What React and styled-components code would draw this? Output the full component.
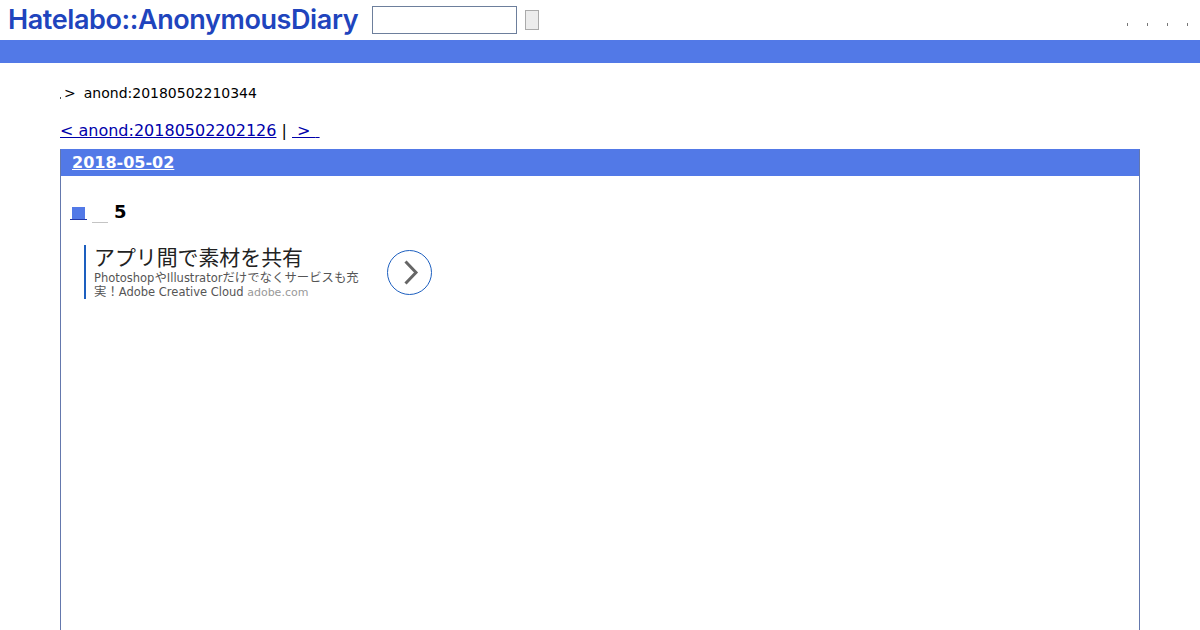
import React from "react"
import styled, { createGlobalStyle } from "styled-components"

const GlobalStyle = createGlobalStyle`
  html, body {
    margin: 0;
    padding: 0;
    height: 630px;
    overflow: hidden;
    background: #fff;
    color: #000;
    font-family: "DejaVu Sans", "Noto Sans CJK JP", sans-serif;
  }
  a { color: #0000aa; }
`

const Banner = styled.header`
  display: flex;
  align-items: flex-start;
  height: 40px;
`

const Logo = styled.a`
  margin: 3px 0 0 8px;
  width: 351px;
  font: 600 27px/34px "Inter", "Liberation Sans", sans-serif;
  letter-spacing: -0.4px;
  white-space: nowrap;
  color: #2044bd;
  text-decoration: none;
`

const SearchInput = styled.input`
  box-sizing: border-box;
  width: 145px;
  height: 28px;
  margin: 6px 0 0 13px;
  border: 1px solid #6d7f9c;
  background: #fff;
  padding: 0;
`

const SearchButton = styled.button`
  box-sizing: border-box;
  width: 14px;
  height: 20px;
  margin: 10px 0 0 8px;
  padding: 0;
  border: 1px solid #aaa;
  background: #ececec;
`

const Tools = styled.ul`
  display: flex;
  gap: 19px;
  list-style: none;
  margin: 23px 12px 0 auto;
  padding: 0;
`

const ToolDot = styled.li`
  width: 1px;
  height: 3px;
  background: #777;
`

const Bar = styled.div`
  height: 23px;
  background: #5279e7;
`

const Main = styled.main`
  padding: 0 60px;
`

const Crumbs = styled.p`
  display: flex;
  align-items: center;
  height: 18px;
  margin: 21px 0 0;
  font-size: 14px;
  line-height: 18px;
`

const CrumbDot = styled.span`
  width: 1px;
  height: 2px;
  margin: 9px 3px 0 0;
  background: #555;
`

const CrumbTitle = styled.span`
  margin-left: 8px;
`

const Pager = styled.div`
  margin-top: 19px;
  font-size: 16px;
  line-height: 20px;
  white-space: pre;
`

const Day = styled.section`
  box-sizing: border-box;
  height: 500px;
  margin-top: 8px;
  border: 1px solid #5279e7;
  border-left-color: #6478ad;
  border-right-color: #6478ad;
`

const DayTitle = styled.h2`
  height: 26px;
  margin: 0;
  padding-left: 11px;
  background: #5279e7;
  font-size: 16px;
  font-weight: 700;
  line-height: 26px;
  a { color: #fff; }
`

const SectionTitle = styled.h3`
  display: flex;
  align-items: center;
  height: 22px;
  margin: 24px 0 0 9px;
  font-size: 18px;
  font-weight: 700;
`

const SectionMark = styled.a`
  display: flex;
  justify-content: center;
  align-items: flex-end;
  width: 17px;
  height: 16px;
  border-bottom: 1px solid #2238a8;
  &::before {
    content: "";
    width: 13px;
    height: 12px;
    background: #5279e7;
  }
`

const SectionSpacer = styled.span`
  width: 16px;
  height: 22px;
  margin-left: 5px;
  border-bottom: 1px solid #c4c4c4;
`

const SectionNumber = styled.span`
  margin-left: 6px;
`

const Ad = styled.aside`
  display: flex;
  align-items: center;
  width: 348px;
  height: 54px;
  margin: 23px 0 0 23px;
`

const AdBody = styled.div`
  box-sizing: border-box;
  width: 303px;
  height: 54px;
  padding-left: 8px;
  border-left: 2px solid #1d5fbf;
`

const AdHeading = styled.div`
  margin-bottom: 4px;
  font: 400 20.9px/22px "Noto Sans CJK JP", sans-serif;
  color: #222;
  white-space: nowrap;
`

const AdLine = styled.div`
  font-size: 11.5px;
  line-height: 14px;
  color: #555;
  white-space: nowrap;
`

const AdKana = styled.span`
  font-size: 12.4px;
`

const AdSite = styled.span`
  font-size: 11px;
  color: #999;
`

const AdArrow = styled.svg`
  flex: none;
  width: 45px;
  height: 45px;
  margin-top: 1px;
`

export default function App() {
  return (
    <>
      <GlobalStyle />
      <Banner>
        <Logo href="#">Hatelabo::AnonymousDiary</Logo>
        <SearchInput />
        <SearchButton />
        <Tools>
          <ToolDot />
          <ToolDot />
          <ToolDot />
          <ToolDot />
        </Tools>
      </Banner>
      <Bar />
      <Main>
        <Crumbs>
          <CrumbDot />
          &gt;
          <CrumbTitle>anond:20180502210344</CrumbTitle>
        </Crumbs>
        <Pager>
          <a href="#">&lt; anond:20180502202126</a> | <a href="#"> &gt; {"\u2005"}</a>
        </Pager>
        <Day>
          <DayTitle>
            <a href="#">2018-05-02</a>
          </DayTitle>
          <SectionTitle>
            <SectionMark href="#" />
            <SectionSpacer />
            <SectionNumber>5</SectionNumber>
          </SectionTitle>
          <Ad>
            <AdBody>
              <AdHeading>アプリ間で素材を共有</AdHeading>
              <AdLine>
                Photoshop<AdKana>や</AdKana>Illustrator<AdKana>だけでなくサービスも充</AdKana>
              </AdLine>
              <AdLine>
                <AdKana>実！</AdKana>Adobe Creative Cloud <AdSite>adobe.com</AdSite>
              </AdLine>
            </AdBody>
            <AdArrow viewBox="0 0 45 45">
              <circle cx="22.5" cy="22.5" r="22" fill="#fff" stroke="#1d5fbf" strokeWidth="1" />
              <path d="M18.5 11.5 L29 22.5 L18.5 33.5" fill="none" stroke="#666" strokeWidth="3" />
            </AdArrow>
          </Ad>
        </Day>
      </Main>
    </>
  )
}
